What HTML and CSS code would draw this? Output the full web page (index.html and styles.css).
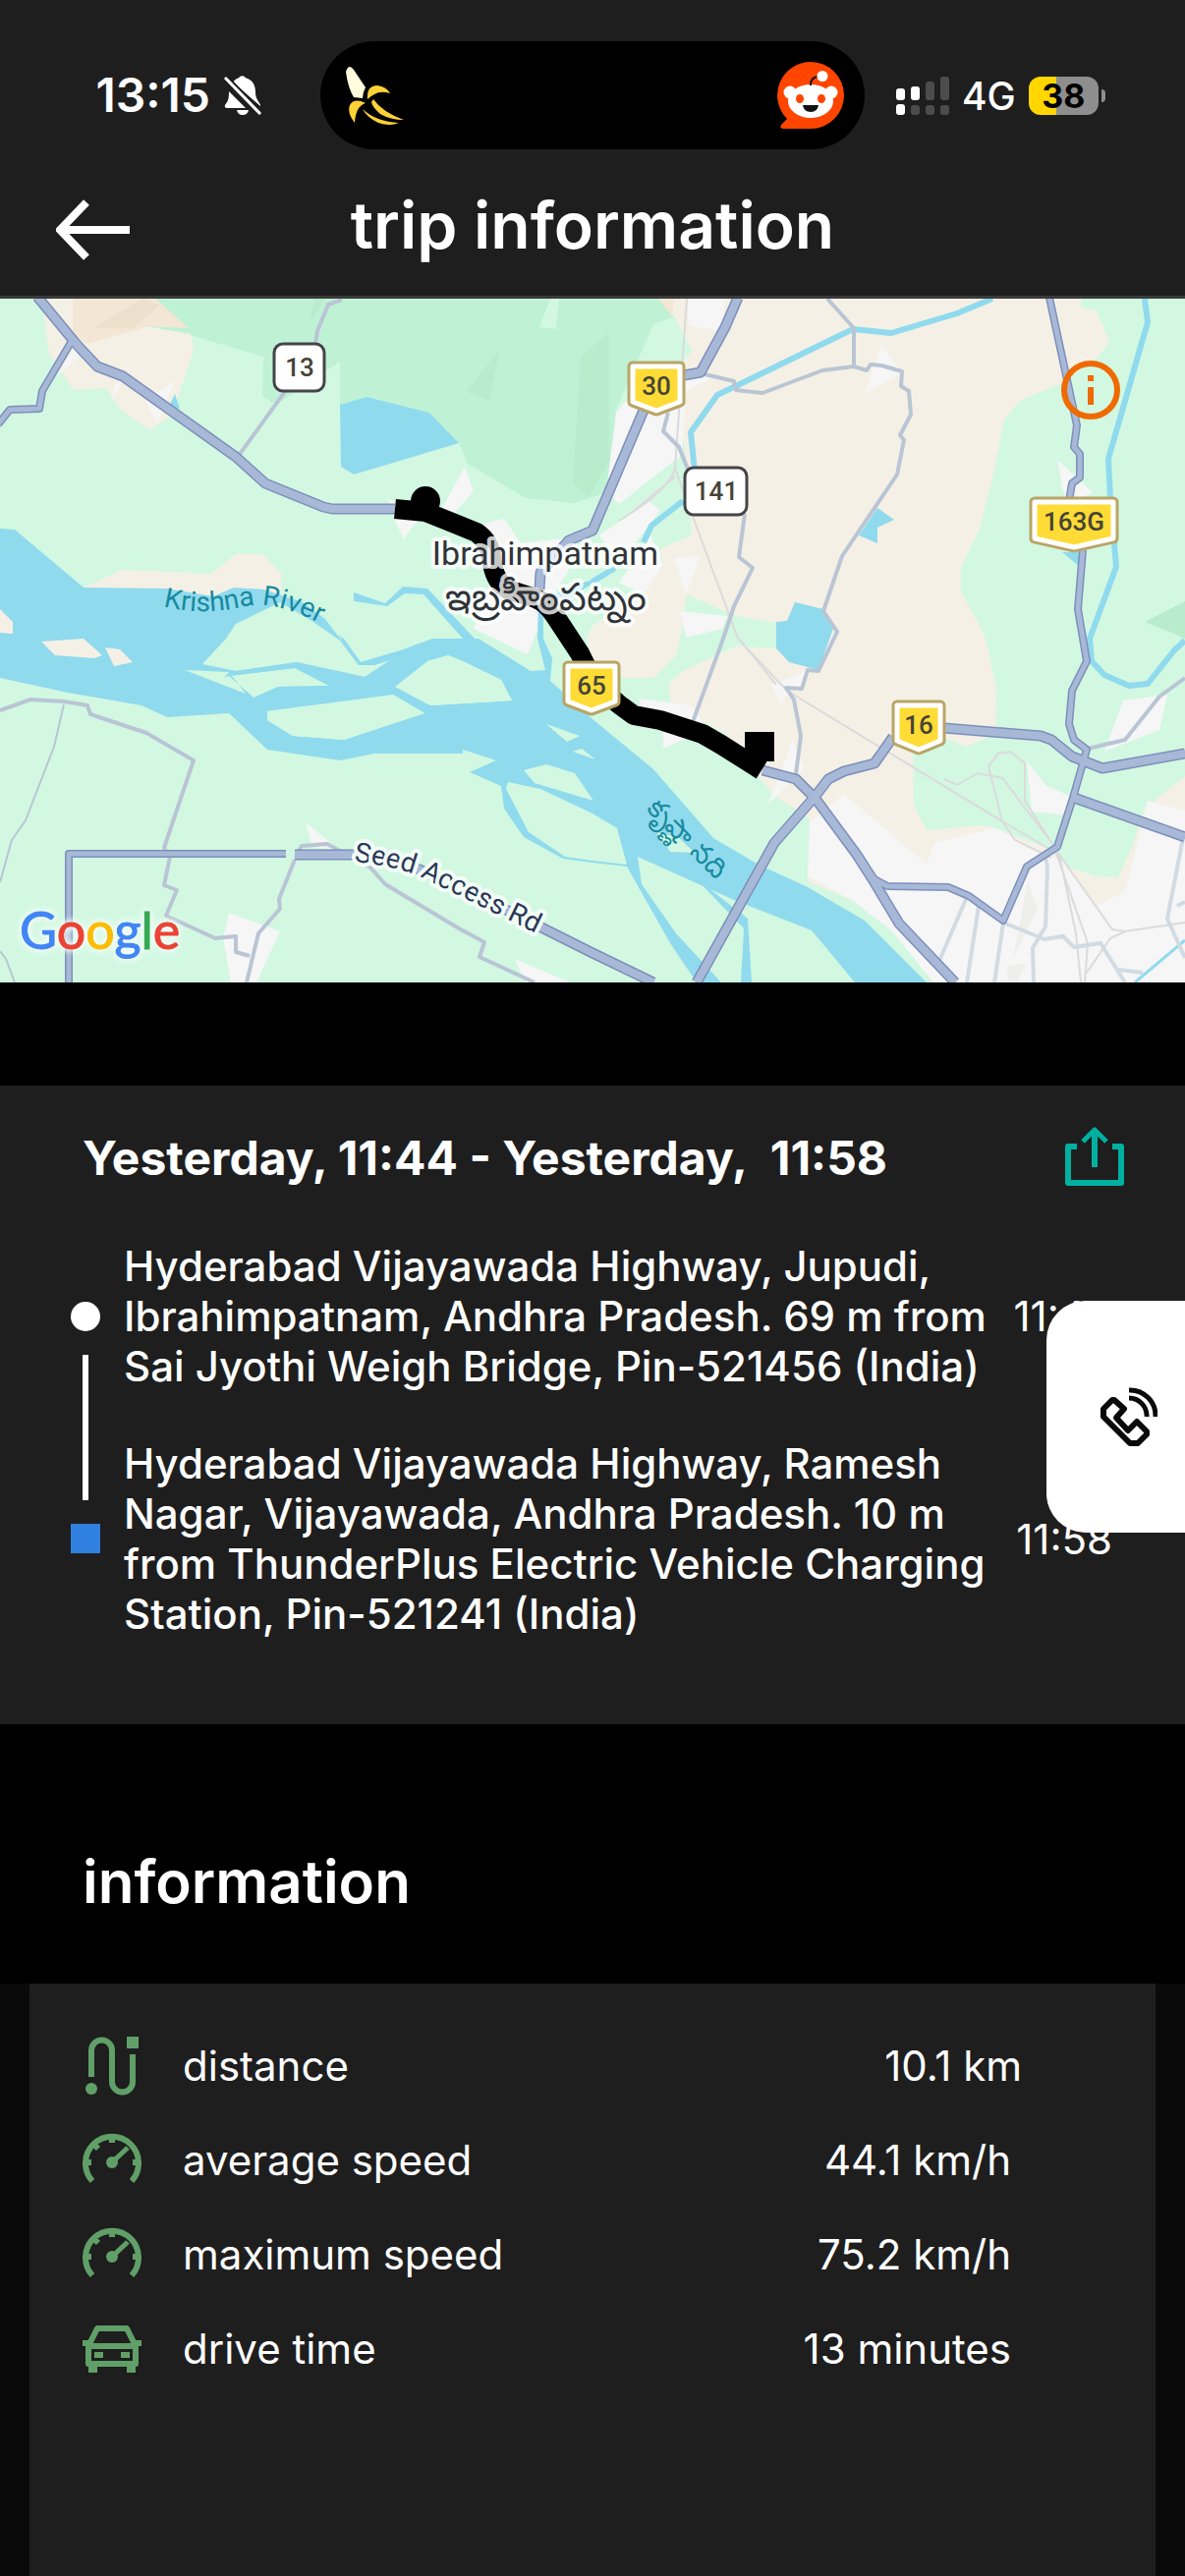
FILE: index.html
```html
<!DOCTYPE html>
<html lang="en">
<head>
<meta charset="utf-8">
<meta name="viewport" content="width=device-width, initial-scale=1">
<title>trip information</title>
<link rel="stylesheet" href="styles.css">
</head>
<body>
<header class="header">
  <div class="status">
    <div class="status-left">
      <span class="clock">13:15</span>
      <svg class="bell" viewBox="0 0 38 40" aria-hidden="true">
        <path fill="#fff" d="M9 6.500C11 4 13 3 14.500 2.500Q18.500-2 22.500 2.500C29 4.500 32 10 32 17C32 23 34.500 25 37 29.500V31ZM5 16L22 33H3Q0 33 1 30C4 26 5 24 5 16ZM13 35H25Q24 40 19 40Q14 40 13 35Z"/>
        <path stroke="#1e1e1e" stroke-width="7" d="M2 3L36 38"/><path stroke="#fff" stroke-width="3.200" stroke-linecap="round" d="M2 3L36 38"/>
      </svg>
    </div>
    <div class="island">
      <svg class="banana" viewBox="0 0 60 60" aria-hidden="true">
        <path fill="#fffbdc" d="M1 6Q4-3 9 4L21 22Q18 27 18 33L9 32Q3 22 1 6Z"/>
        <path fill="#fdd236" d="M23 34Q22 20 33 20Q42 21 46 28Q36 25 30 29Q26 31 23 34ZM21 38Q11 41 10 58Q2 48 5 40Q9 33 19 37ZM29 34Q38 47 60 55Q46 55 36 49Q28 42 27 37ZM18 44Q32 57 55 58Q46 62 34 58Q22 52 18 44Z"/>
      </svg>
      <svg class="reddit" viewBox="0 0 68 68" aria-hidden="true">
        <path fill="#ff4500" d="M34 0A34 34 0 1 1 34 68H6Q1 67 5 63L10 58A34 34 0 0 1 34 0Z"/>
        <circle cx="13" cy="31" r="6.500" fill="#fff"/><circle cx="55" cy="31" r="6.500" fill="#fff"/>
        <ellipse cx="34" cy="40" rx="23" ry="17" fill="#fff"/>
        <path d="M34 24Q34 15 42 15" fill="none" stroke="#111" stroke-width="2"/><circle cx="46" cy="14.500" r="5.500" fill="#fff"/>
        <ellipse cx="23" cy="37.500" rx="4" ry="4.500" fill="#ff4500"/><ellipse cx="45" cy="37.500" rx="4" ry="4.500" fill="#ff4500"/>
        <path d="M26 44H42Q41 51 34 51Q27 51 26 44Z" fill="#111"/>
      </svg>
    </div>
    <div class="status-right">
      <svg class="signal" viewBox="0 0 54 39" aria-hidden="true">
        <g fill="#fff"><rect y="12" width="9" height="12" rx="3"/><rect x="15" y="10" width="9" height="14" rx="3"/><rect y="28" width="9" height="11" rx="3"/></g>
        <g fill="#4c4c4c"><rect x="30" y="5" width="9" height="19" rx="3"/><rect x="45" width="9" height="24" rx="3"/><rect x="15" y="29" width="9" height="10" rx="3"/><rect x="30" y="29" width="9" height="10" rx="3"/><rect x="45" y="29" width="9" height="10" rx="3"/></g>
      </svg>
      <span class="network">4G</span>
      <span class="battery">38</span>
    </div>
  </div>
  <div class="titlebar">
    <button class="icon-button back" aria-label="Back">
      <svg viewBox="0 0 76 62" fill="none" stroke="#fff" stroke-width="8"><path d="M31 3L4 31L31 59M4 31H75"/></svg>
    </button>
    <h1>trip information</h1>
  </div>
</header>

<main class="main">
  <section class="map" aria-label="Map">
    <svg class="map-canvas" viewBox="0 304 1206 696">
      <rect y="304" width="1206" height="696" fill="#d2f8e2"/>
      <g fill="#bff1d4">
        <path d="M158 304L192 334L148 332L197 342L268 363L267 403L281 412L346 368V412L373 404L437 420L467 451L476 472L535 507L585 512L620 500L627 417L665 330L686 322L670 304Z"/>
        <path fill="#d2f8e2" d="M560 304L569 304L566 335L549 333Z"/>
        <path fill="#b9ebcd" d="M508 356L499 408L475 398ZM591 363L620 338V470L600 505L583 492ZM320 304L330 304L316 328ZM1206 612V650L1195 645L1165 633Z"/>
      </g>
      <g fill="#f5f0e5">
        <path d="M42 304L50 360L75 397L108 395L123 417L152 438L175 423L197 357L194 340L148 332L158 304Z"/>
        <path d="M686 304H1101L1099 312L1116 317L1129 347L1118 363L1080 390L1038 408L1022 427L1011 483L997 538L978 577V602L997 637L1003 650L1014 700L1013 747L984 760L949 747L929 763L930 820L943 845L999 840L1013 843L1065 863L1086 882L1115 892L1138 893L1153 860L1165 823L1206 790V930H900L822 897L824 833L788 810L738 747L682 715L681 695L695 683L749 658L790 660V634L749 627L699 605L692 650L688 667L665 690H626L603 672L597 650L603 637L641 610L675 577L672 558L704 545L700 480L695 443L697 365L705 357L686 322L670 304Z"/>
        <path d="M85 598L125 580L215 584L240 564H267L287 585L285 613L238 635L226 650L206 676L165 668L138 673L154 650L151 625L121 616Z"/>
        <path d="M822 897L940 1000H900L868 940Z"/>
      </g>
      <path fill="#f3e6d5" d="M74 304V340L88 350L152 332L192 334L158 304ZM670 304H686L684 322Z"/>
      <path fill="#ece0cc" d="M145 304L95 334H135L163 310Z"/>
      <g fill="#f6f6f6">
        <path d="M859 808L824 837L822 892L868 917L907 947L950 1000H1206V825L1168 815L1145 907L1116 922L1082 877L1013 843L951 858L943 880Z"/>
        <path d="M699 304H738L735 336L701 332ZM715 377L725 385L698 398L694 463L630 513L617 500L627 420L650 393ZM157 365L125 386L113 410L117 392ZM179 387L160 430L148 409ZM78 350L86 358L58 383ZM473 475L482 500L460 525L447 523ZM395 508L433 522L420 536L411 549L402 530ZM490 534L513 528L530 553L580 547L578 582L560 610L537 666L482 640L500 590ZM610 545L660 510L672 519L645 555L620 560ZM630 593L662 545L675 575L655 605ZM686 568L713 566L698 605ZM692 622L740 627L735 640L698 649ZM897 351L918 380L880 400ZM1076 468L1112 501L1090 512L1082 500ZM650 711L704 718L720 742L675 762V742L655 728ZM785 697L820 683L814 702L805 700L795 717ZM806 752L818 783L782 818L795 785ZM1045 775L1065 800L1093 812L1088 830L1050 826ZM1143 713L1188 707L1180 743L1124 765ZM311 837L345 865L318 862ZM233 929L285 948L261 1000H235L227 955ZM524 976L580 1000H535Z"/>
      </g>
      <path fill="#eeeeec" d="M1046 897L1056 926L1031 975ZM1025 983L1044 981L1035 1000H1026Z"/>
      <g fill="#90daee">
        <path d="M0 538L15 539L85 598L169 599L217 607L238 598L269 600L308 613L331 630L346 650L367 674L408 662L440 650H471L431 605L412 604L394 617L360 612V603L392 614L410 597L435 599L483 650L487 650L540 683L555 682L547 650L548 610L588 595L603 590V594L553 625V650L562 670L560 693L603 732L665 783L726 853L772 880L822 903L880 937L943 1000H870L826 947L749 917L649 872L653 900L688 950L734 1000H709L682 960L638 882L603 878L573 874L533 852L513 823L510 800L478 786L505 774L471 763V767H381L346 774L272 763L233 726L170 730L144 718L69 705L0 690Z"/>
        <path d="M346 412L373 404L437 420L467 451L360 483L347 475ZM178 401L183 416L171 415ZM893 517L910 529L893 537V553L874 545ZM809 613L838 620L849 637L833 682L803 674L790 660V633L801 632ZM1081 562H1101L1099 577ZM707 893L761 935L765 1000H754L757 945Z"/>
      </g>
      <g fill="#d2f8e2">
        <path d="M233 688L300 680L335 698L283 699L258 710ZM233 684L188 682L250 706ZM346 652L365 677H381L412 662L427 663L371 689L302 674L240 683L206 676L230 650L240 635L285 613L319 633Z"/>
        <path d="M272 724L400 707L432 726L350 753L298 749L272 733ZM402 699L435 673L456 667L471 673L510 692L521 713L438 718ZM556 737L590 749L577 755ZM583 765L592 762L606 773ZM533 784L556 778L585 787L604 815L544 797ZM517 796L550 803L603 828L628 843L638 880L603 876L575 872L538 847L515 803ZM668 847L682 867L707 868L690 852Z"/>
      </g>
      <g fill="#90daee"><path d="M228 690L233 684L302 674L371 689L412 662L430 658L440 700L340 720L258 712L283 699L335 698L300 680L233 688ZM344 646L350 650L367 674L408 662L430 654L427 663L381 677H365Z"/></g>
      <path fill="#d2f8e2" d="M272 724L400 707L432 726L350 753L298 749L272 733ZM402 699L435 673L456 667L471 673L510 692L521 713L438 718Z"/>
      <path fill="#f5f0e5" d="M0 620L13 633V645L0 644ZM42 653L85 650L104 667L96 670L56 667ZM107 659L122 661L135 674L116 678Z"/>
      <g fill="none" stroke="#90daee" stroke-width="6" stroke-linejoin="round">
        <path d="M1010 304L974 319L907 339L868 335L753 391L730 402L703 440L708 490M695 510L663 535L655 552M626 578L603 592M1165 304L1168 328L1128 467L1130 507L1136 577L1109 650L1111 673L1124 687L1149 698L1168 696L1195 662L1206 652"/>
        <path stroke-width="3" d="M1206 957L1155 1000"/>
      </g>
      <g fill="none" stroke="#dcdadb" stroke-width="2">
        <path d="M699 304L687 477L751 650L801 703L1020 836L1078 870L1132 946L1145 948L1206 939M687 477Q680 500 630 530M687 485L645 520M752 650L790 697M961 793L974 799L995 787L1020 792L1072 860L1107 960L1104 1000M1020 836L1006 780L1016 767L1028 765L1043 777V815L1078 870L1095 950L1100 1000M1020 836L1033 855L1070 873M1145 948L1130 955L1106 990"/>
      </g>
      <g fill="none" stroke="#d2dbe2" stroke-width="4">
        <path d="M1021 939L1063 956L1082 953L1093 964L1120 960L1145 1000M1138 987L1163 990M1021 940L1012 1000M984 913L956 978M996 922L984 1000M1064 872L1066 883L1064 943L1051 965L1052 1000M1204 853L1188 935L1206 975M1198 922L1206 918"/>
      </g>
      <g fill="none" stroke="#b9c5d4" stroke-width="4" stroke-linejoin="round">
        <path d="M348 305L334 310L323 337L321 350L289 400L242 465M842 304L869 334V373L837 377L776 400L749 397L747 388L713 380M869 373L882 377L886 371L897 372L918 378L917 393L925 398L927 422L916 443L920 448L913 483L857 566L838 622L852 643L833 683L822 682L816 701L800 700L808 712L815 749L810 788M680 420L675 439L691 455L701 480M758 523L752 567L766 578L747 617L736 650L705 735M0 723L31 712L65 714L89 718L92 727L149 746L197 774L167 863L173 872L167 901L180 906L169 932L219 955L240 953V969L254 973M300 875L284 915L285 925L263 950L251 1000M301 873L307 861L333 859L377 883L392 900L467 945L493 959L488 974L544 1000M1107 762L1145 753L1180 709L1206 690"/>
        <path stroke-width="2" d="M65 717L55 760L26 835L12 855L0 898M0 968L6 976L15 1000"/>
      </g>
      <g fill="none" stroke-linejoin="round">
        <g stroke="#7d8fba">
          <path stroke-width="11" d="M38 302L75 347L82 355L99 373L125 383L240 465L270 492L329 516L338 518H402M751 303L738 333L713 379L668 387L603 540L579 550L550 583L549 600M961 741L1059 749L1070 753L1091 770L1122 782L1206 767M709 1000L788 858L830 810L843 793L859 785L890 777L909 750M1093 812L1206 852M776 784L810 793L830 813L872 870L888 895L915 940L972 1000M300 870H360L427 885L517 927L603 970L665 1000"/>
          <path stroke-width="8" d="M73 347L43 398L40 416L10 417L-2 432M1068 303L1096 433L1093 455L1099 462V486L1091 492L1088 510M1102 560L1097 620L1106 673L1091 703L1088 737L1093 753L1106 763L1092 812L1076 862L1045 882L1021 937L986 912L965 903L903 902L890 895M70 1000V869H291"/>
        </g>
        <g stroke="#a8b9d8">
          <path stroke-width="8" d="M38 302L75 347L82 355L99 373L125 383L240 465L270 492L329 516L338 518H402M751 303L738 333L713 379L668 387L603 540L579 550L550 583L549 600M961 741L1059 749L1070 753L1091 770L1122 782L1206 767M709 1000L788 858L830 810L843 793L859 785L890 777L909 750M1093 812L1206 852M776 784L810 793L830 813L872 870L888 895L915 940L972 1000M300 870H360L427 885L517 927L603 970L665 1000"/>
          <path stroke-width="5" d="M73 347L43 398L40 416L10 417L-2 432M1068 303L1096 433L1093 455L1099 462V486L1091 492L1088 510M1102 560L1097 620L1106 673L1091 703L1088 737L1093 753L1106 763L1092 812L1076 862L1045 882L1021 937L986 912L965 903L903 902L890 895M70 1000V869H291"/>
        </g>
        <path stroke="#000" stroke-width="20" d="M402 518L433 521L458 531L485 542Q499 552 500 567Q503 595 520 601L545 609Q556 613 565 627L590 665L605 695L630 717L645 728L672 733L715 747L734 758L775 784"/>
      </g>
      <circle cx="433" cy="510" r="15"/><path d="M758 745H788V775H758Z"/>

      <g class="shield">
        <g fill="#ffdc35" stroke="#b9a565" stroke-width="11" stroke-linejoin="round">
          <path d="M644 373H692V409L668 418L644 409Z"/><path d="M578 678H626V714L602 723L578 714Z"/><path d="M913 718H957V754L935 763L913 754Z"/><path d="M1053 511H1133V548L1093 557L1053 548Z"/>
        </g>
        <g fill="#ffdc35" stroke="#fff" stroke-width="5" stroke-linejoin="round">
          <path d="M644 373H692V409L668 418L644 409Z"/><path d="M578 678H626V714L602 723L578 714Z"/><path d="M913 718H957V754L935 763L913 754Z"/><path d="M1053 511H1133V548L1093 557L1053 548Z"/>
        </g>
        <g fill="#fff" stroke="#454548" stroke-width="3"><rect x="279" y="350" width="51" height="48" rx="9"/><rect x="697" y="476" width="63" height="48" rx="9"/></g>
        <text x="668" y="402">30</text><text x="602" y="707">65</text><text x="935" y="747">16</text><text x="1093" y="540">163G</text><text x="305" y="383">13</text><text x="729" y="509">141</text>
      </g>
      <text class="place" x="555" y="575">Ibrahimpatnam</text>
      <text class="place telugu" x="555" y="621" lang="te">ఇబ్రహీంపట్నం</text>
      <path id="river-line" fill="none" d="M166 617Q205 627 245 618Q285 608 345 646"/>
      <path id="road-line" fill="none" d="M360 877Q400 881 427 892L570 962"/>
      <text class="river"><textPath href="#river-line">Krishna River</textPath></text>
      <text class="road"><textPath href="#road-line">Seed Access Rd</textPath></text>
      <text class="river" transform="translate(657 824) rotate(45)" lang="te">కృష్ణా నది</text>
    </svg>
    <span class="google"><span class="blue">G</span><span class="red">o</span><span class="yellow">o</span><span class="blue">g</span><span class="green">l</span><span class="red">e</span></span>
    <button class="icon-button info" aria-label="Map info">
      <svg viewBox="0 0 60 60"><circle cx="30" cy="30" r="27" fill="none" stroke="#ef6a00" stroke-width="6"/><path fill="#ef6a00" d="M27 15H33V21H27ZM27 27H33V45H27Z"/></svg>
    </button>
  </section>

  <section class="trip">
    <div class="trip-head">
      <h2>Yesterday, 11:44 - Yesterday,&nbsp; 11:58</h2>
      <button class="icon-button share" aria-label="Share">
        <svg viewBox="0 0 60 60" fill="none" stroke="#00b0a0" stroke-width="6" stroke-linejoin="round"><path d="M12 20H3V57H57V20H48M30 41V5"/><path stroke-width="5" d="M18 15L30 3L42 15"/></svg>
      </button>
    </div>
    <div class="timeline">
      <div class="track" aria-hidden="true"><span class="dot"></span><span class="line"></span><span class="square"></span></div>
      <ol class="stops">
        <li><p>Hyderabad Vijayawada Highway, Jupudi, Ibrahimpatnam, Andhra Pradesh. 69 m from Sai Jyothi Weigh Bridge, Pin-521456 (India)</p><time>11:44</time></li>
        <li><p>Hyderabad Vijayawada Highway, Ramesh Nagar, Vijayawada, Andhra Pradesh. 10 m from ThunderPlus Electric Vehicle Charging Station, Pin-521241 (India)</p><time>11:58</time></li>
      </ol>
    </div>
    <button class="call" aria-label="Call">
      <svg viewBox="0 0 58 60" fill="none" stroke="#0a0a0a" stroke-width="6" stroke-linejoin="round">
        <path d="M14 13L24 22L16 31L28 44L37 35L47 45V48L38 57H30L3 30V22L12 13Z"/><path stroke-width="5" d="M29 11A18 18 0 0 1 47 30M29 3A26 26 0 0 1 56 30"/>
      </svg>
    </button>
  </section>

  <h2 class="section-title">information</h2>
  <section class="details">
    <dl class="stats">
      <div class="stat distance">
        <svg viewBox="0 0 60 60" fill="none" stroke="#60a068" stroke-width="6"><path d="M9 41V14A10 10 0 0 1 30 14V46A10 10 0 0 0 51 46V18"/><circle cx="9" cy="53" r="6" fill="#60a068" stroke="none"/><path fill="#60a068" stroke="none" d="M45 0H57V12H45Z"/></svg>
        <dt>distance</dt><dd>10.1 km</dd>
      </div>
      <div class="stat">
        <svg viewBox="0 0 60 60" fill="none" stroke="#60a068" stroke-width="6"><path d="M10 51A27 27 0 1 1 50 51M30 6V12M3 32H9M57 32H51M12 14L16 18"/><path stroke-width="5" d="M30 32L46 17"/><circle cx="30" cy="32" r="6" fill="#60a068" stroke="none"/></svg>
        <dt>average speed</dt><dd>44.1 km/h</dd>
      </div>
      <div class="stat">
        <svg viewBox="0 0 60 60" fill="none" stroke="#60a068" stroke-width="6"><path d="M10 51A27 27 0 1 1 50 51M30 6V12M3 32H9M57 32H51M12 14L16 18"/><path stroke-width="5" d="M30 32L46 17"/><circle cx="30" cy="32" r="6" fill="#60a068" stroke="none"/></svg>
        <dt>maximum speed</dt><dd>75.2 km/h</dd>
      </div>
      <div class="stat">
        <svg viewBox="0 0 60 60" fill="none" stroke="#60a068" stroke-width="6" stroke-linejoin="round"><path d="M6 27L15 9H45L54 27V45H6ZM6 27H54M0 24H8M52 24H60"/><path fill="#60a068" stroke="none" d="M12 33H21V39H12ZM39 33H48V39H39ZM6 46H15V54H6ZM45 46H54V54H45Z"/></svg>
        <dt>drive time</dt><dd>13 minutes</dd>
      </div>
    </dl>
  </section>
</main>
</body>
</html>
```
FILE: styles.css
```css
* { box-sizing: border-box; margin: 0; padding: 0; }

body {
  display: flex;
  flex-direction: column;
  min-height: 100vh;
  background: #000;
  color: #fff;
  font-family: Inter, "Noto Sans", sans-serif;
}

svg { display: block; }
button { border: 0; font: inherit; cursor: pointer; }
.icon-button { background: none; }
.icon-button svg { width: 100%; }

.header { background: #1e1e1e; border-bottom: 3px solid #3a3a3a; }

.status {
  display: grid;
  grid-template-columns: 1fr 554px 1fr;
  align-items: center;
  padding: 42px 0 8px;
}
.status-left { display: flex; align-items: center; justify-content: flex-end; gap: 14px; padding-right: 60px; }
.clock { font-size: 48px; font-weight: 600; line-height: 56px; }
.bell { width: 38px; }
.island {
  display: flex;
  align-items: center;
  justify-content: space-between;
  height: 110px;
  padding: 0 21px 0 25px;
  border-radius: 55px;
  background: #000;
}
.banana { width: 60px; }
.reddit { width: 68px; }
.status-right { display: flex; align-items: center; gap: 13px; padding-left: 32px; }
.signal { width: 54px; }
.network { font-size: 39px; font-weight: 500; }
.battery {
  position: relative;
  width: 71px;
  border-radius: 12px;
  background: linear-gradient(90deg, #ffd600 40%, #8e8e8e 40%);
  color: #000;
  font-size: 34px;
  font-weight: 700;
  line-height: 39px;
  text-align: center;
}
.battery::after {
  content: "";
  position: absolute;
  top: 13px;
  right: -7px;
  width: 4px;
  height: 13px;
  border-radius: 0 6px 6px 0;
  background: #8e8e8e;
}

.titlebar {
  display: grid;
  grid-template-columns: 1fr auto 1fr;
  align-items: start;
  height: 141px;
  padding: 29px 57px 0;
}
.titlebar h1 { font-size: 66px; font-weight: 600; line-height: 80px; }
.back { width: 76px; padding-top: 14px; }

.main { display: flex; flex: 1; flex-direction: column; }

.map { position: relative; }
.map-canvas { width: 100%; height: auto; font-family: Roboto, "Noto Sans", sans-serif; }
.info { position: absolute; top: 63px; right: 66px; width: 60px; }
.shield text { fill: #464438; font-size: 26px; font-weight: 500; text-anchor: middle; }
.place, .river, .road { paint-order: stroke; stroke-linejoin: round; }
.place { fill: #303338; stroke: rgba(255, 255, 255, 0.8); stroke-width: 8px; font-size: 34px; text-anchor: middle; }
.place.telugu { font-size: 39px; }
.river { fill: #178a9e; font-size: 28px; }
.road { fill: #2b3757; stroke: #f3fdf7; stroke-width: 8px; font-size: 28px; }
.google {
  position: absolute;
  bottom: 22px;
  left: 20px;
  font-family: Lato, sans-serif;
  font-size: 52px;
  line-height: 64px;
  -webkit-text-stroke: 1px currentColor;
  filter: drop-shadow(0 0 3px #f3fdf7) drop-shadow(0 0 3px #f3fdf7);
}
.blue { color: #4285f4; }
.red { color: #ea4335; }
.yellow { color: #fbbc05; }
.green { color: #34a853; }

.trip { position: relative; margin-top: 105px; padding: 34px 62px 87px 72px; background: #1e1e1e; }
.trip-head { display: flex; align-items: center; justify-content: space-between; padding-left: 12px; }
.trip-head h2 { font-size: 48px; font-weight: 700; line-height: 80px; }
.share { width: 60px; padding-bottom: 4px; }

.timeline { display: flex; gap: 24px; margin-top: 44px; padding-right: 12px; }
.track { display: flex; flex-direction: column; align-items: center; gap: 24px; padding: 62px 0 87px; }
.dot { width: 30px; height: 30px; border-radius: 50%; background: #fff; }
.line { flex: 1; width: 6px; background: #fff; }
.square { width: 30px; height: 30px; background: #3080e0; }
.stops { display: flex; flex: 1; flex-direction: column; gap: 48px; list-style: none; font-size: 42px; line-height: 51px; }
.stops li { display: flex; align-items: center; justify-content: space-between; gap: 24px; }
.stops p { flex: 1; font-weight: 500; }
.stops time { flex: none; }

.call {
  position: absolute;
  top: 219px;
  right: 0;
  display: flex;
  align-items: center;
  justify-content: flex-end;
  width: 141px;
  height: 236px;
  padding-right: 28px;
  border-radius: 40px 0 0 40px;
  background: #fff;
}
.call svg { width: 58px; }

.section-title { padding: 120px 84px 64px; font-size: 60px; font-weight: 600; line-height: 80px; }

.details { display: flex; flex: 1; flex-direction: column; padding: 0 30px; background: #0a0a0a; }
.stats { flex: 1; padding: 36px 147px 36px 54px; background: #1e1e1e; }
.stat { display: flex; align-items: center; height: 96px; font-size: 42px; line-height: 52px; }
.stat svg { width: 60px; margin-right: 42px; }
.stat dd { margin-left: auto; }
.distance { margin-right: -11px; }
```
